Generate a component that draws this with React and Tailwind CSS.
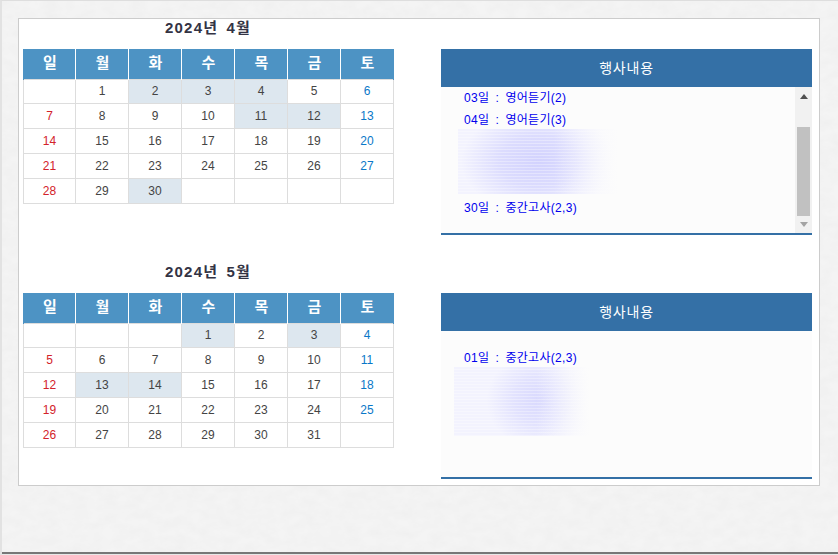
const FONT = "font-['Liberation_Sans','Noto_Sans_CJK_KR',sans-serif]";

const days = ['일', '월', '화', '수', '목', '금', '토'];

const april = [
  ['', '1', '2', '3', '4', '5', '6'],
  ['7', '8', '9', '10', '11', '12', '13'],
  ['14', '15', '16', '17', '18', '19', '20'],
  ['21', '22', '23', '24', '25', '26', '27'],
  ['28', '29', '30', '', '', '', ''],
];
const may = [
  ['', '', '', '1', '2', '3', '4'],
  ['5', '6', '7', '8', '9', '10', '11'],
  ['12', '13', '14', '15', '16', '17', '18'],
  ['19', '20', '21', '22', '23', '24', '25'],
  ['26', '27', '28', '29', '30', '31', ''],
];

function Calendar({ title, weeks, marked }) {
  return (
    <div className="w-[371px] shrink-0">
      <h2 className="h-[30px] pl-[142px] text-[15px] leading-[18px] font-bold text-[#333344] tracking-[1.2px] [word-spacing:3px] whitespace-nowrap">{title}</h2>
      <table className="w-[370px] table-fixed border-collapse text-[12px]">
        <colgroup>
          <col className="w-[52px]" />
          <col className="w-[53px]" />
          <col className="w-[53px]" />
          <col className="w-[53px]" />
          <col className="w-[53px]" />
          <col className="w-[53px]" />
          <col className="w-[53px]" />
        </colgroup>
        <thead>
          <tr className="h-[30px]">
            {days.map((d) => (
              <th key={d} className="p-0 pl-[1px] border-x border-x-white first:border-l-[#4d93c4] last:border-r-[#4d93c4] bg-[#4d93c4] text-white text-[15px] font-bold text-center pb-[2px]">{d}</th>
            ))}
          </tr>
        </thead>
        <tbody>
          {weeks.map((w, i) => (
            <tr key={i} className={i === 0 ? 'h-[24px]' : 'h-[25px]'}>
              {w.map((n, j) => {
                const color = j === 0 ? 'text-[#d3222a]' : j === 6 ? 'text-[#0a78c8]' : 'text-[#444444]';
                const bg = marked.includes(n) ? 'bg-[#dde7ef]' : 'bg-white';
                return (
                  <td key={j} className={`p-0 border border-[#dddddd] text-center ${color} ${bg}`}>{n}</td>
                );
              })}
            </tr>
          ))}
        </tbody>
      </table>
    </div>
  );
}

function Blob({ className, glow }) {
  return (
    <div className={`relative overflow-hidden bg-[#f3f3fe] ${className}`}>
      <div className={`absolute inset-0 ${glow}`} />
      <div className="absolute inset-0 bg-[repeating-linear-gradient(180deg,#ffffff00_0px,#ffffff00_2px,#ffffff55_2px,#ffffff55_3px)]" />
      <div className="absolute inset-y-0 right-0 w-[40%] bg-[linear-gradient(90deg,#fcfcfc00,#fcfcfc)]" />
    </div>
  );
}

function Event({ children }) {
  return <p className="text-[12px] leading-[16px] text-[#0000ee] whitespace-nowrap pl-[23px] tracking-[0.3px] [word-spacing:2.6px]">{children}</p>;
}

function Panel({ children, scroll }) {
  return (
    <div className="w-[371px] shrink-0 mt-[30px]">
      <div className="h-[38px] bg-[#3470a6] text-white text-[14px] tracking-[0.8px] flex items-center justify-center">행사내용</div>
      <div className="h-[146px] bg-[#fcfcfc] flex overflow-hidden">
        <div className="flex-1 min-w-0">{children}</div>
        {scroll && (
          <div className="w-[17px] bg-[#f1f1f1] flex flex-col items-center">
            <svg width="8" height="5" viewBox="0 0 8 5" className="mt-[7px] shrink-0"><path d="M4 0 8 5H0Z" fill="#505050" /></svg>
            <div className="w-[13px] h-[89px] bg-[#c1c1c1] mt-[28px] shrink-0" />
            <svg width="8" height="5" viewBox="0 0 8 5" className="mt-[6px] shrink-0"><path d="M0 0H8L4 5Z" fill="#a3a3a3" /></svg>
          </div>
        )}
      </div>
      <div className="h-[2px] bg-[#3470a6]" />
    </div>
  );
}

export default function App() {
  return (
    <div className={`relative w-[838px] h-[555px] overflow-hidden bg-[#f4f4f4] pt-[18px] pl-[18px] border-t border-t-[#dedede] border-l-2 border-l-[#e2e2e2] ${FONT}`}>
      <svg className="absolute inset-0" width="838" height="555" aria-hidden="true">
        <filter id="paper"><feTurbulence type="fractalNoise" baseFrequency="0.07 0.11" numOctaves="3" seed="4" /><feColorMatrix values="0 0 0 0 0.8  0 0 0 0 0.8  0 0 0 0 0.8  0.5 0 0 0 -0.13" /></filter>
        <rect width="838" height="555" filter="url(#paper)" />
      </svg>
      <div className="absolute left-0 right-0 bottom-[1px] h-[2px] bg-[#777777]" />
      <div className="absolute left-0 right-0 bottom-0 h-[1px] bg-[#e8e8e8]" />

      <div className="relative -ml-[2px] -mt-px w-[802px] h-[468px] bg-white border border-[#cccccc] pl-[4px] flex flex-col gap-[29px]">
        <section className="flex gap-[47px] h-[215px]">
          <Calendar title="2024년 4월" weeks={april} marked={['2', '3', '4', '11', '12', '30']} />
          <Panel scroll>
            <div className="pt-[3px]"><Event>03일 : 영어듣기(2)</Event></div>
            <div className="pt-[6px]"><Event>04일 : 영어듣기(3)</Event></div>
            <Blob className="ml-[17px] mt-[1px] w-[160px] h-[65px]" glow="bg-[radial-gradient(ellipse_48%_80%_at_50%_50%,#d2d2fe_0%,#dcdcfe_50%,#f3f3fe00_100%)]" />
            <div className="pt-[6px]"><Event>30일 : 중간고사(2,3)</Event></div>
          </Panel>
        </section>
        <section className="flex gap-[47px]">
          <Calendar title="2024년 5월" weeks={may} marked={['1', '3', '13', '14']} />
          <Panel>
            <div className="pt-[19px]"><Event>01일 : 중간고사(2,3)</Event></div>
            <Blob className="ml-[13px] mt-[1px] w-[136px] h-[69px]" glow="bg-[radial-gradient(ellipse_40%_70%_at_64%_48%,#d8d8fe_0%,#e2e2fe_50%,#f3f3fe00_100%)]" />
          </Panel>
        </section>
      </div>
    </div>
  );
}
